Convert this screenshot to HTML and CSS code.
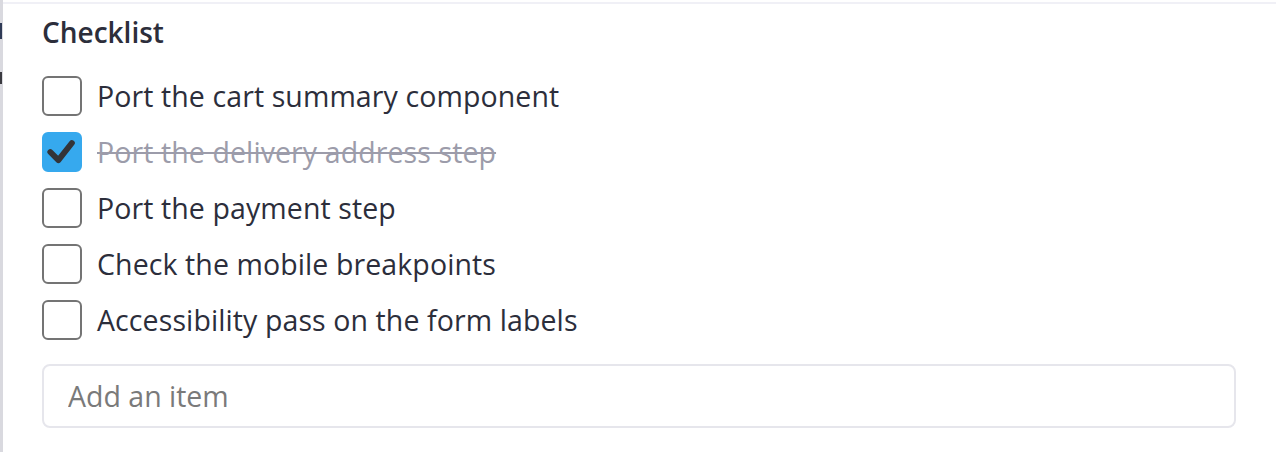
FILE: index.html
```html
<!DOCTYPE html>
<html lang="en">
  <head>
    <meta charset="UTF-8" />
    <title>Checklist</title>
    <link rel="stylesheet" href="styles.css">
  </head>
  <body>
    <div class="page">
      <div class="side">
        <span class="mark mark-one"></span>
        <span class="mark mark-two"></span>
      </div>
      <div class="panel">
        <h3 class="title">Checklist</h3>
        <ul class="checklist">
          <li class="check-item">
            <span class="box"></span>
            <span class="label">Port the cart summary component</span>
          </li>
          <li class="check-item done">
            <span class="box">
              <svg viewBox="0 0 40 40" width="40" height="40">
                <path d="M7 20 L16 29 L31 10" fill="none" stroke="#333438" stroke-width="6.5" stroke-linecap="round" stroke-linejoin="round" />
              </svg>
            </span>
            <span class="label">Port the delivery address step</span>
          </li>
          <li class="check-item">
            <span class="box"></span>
            <span class="label">Port the payment step</span>
          </li>
          <li class="check-item">
            <span class="box"></span>
            <span class="label">Check the mobile breakpoints</span>
          </li>
          <li class="check-item">
            <span class="box"></span>
            <span class="label">Accessibility pass on the form labels</span>
          </li>
        </ul>
        <input class="add-input" type="text" placeholder="Add an item" />
      </div>
    </div>
  </body>
</html>
```

FILE: styles.css
```css
* {
  margin: 0;
  padding: 0;
  box-sizing: border-box;
}

body {
  font-family: "Open Sans", "Noto Sans", sans-serif;
  background-color: #fff;
  color: #2c2e3b;
}

.page {
  display: flex;
  height: 452px;
  overflow: hidden;
}

/* Edge of the column behind the panel */
.side {
  width: 3px;
  background-color: #d9d9df;
  display: flex;
  flex-direction: column;
}

.mark {
  display: block;
  width: 2px;
  background-color: #2f3a56;
}

.mark-one {
  height: 16px;
  margin-top: 23px;
}

.mark-two {
  height: 12px;
  margin-top: 33px;
  background-color: #3a3a40;
}

/* Checklist panel */
.panel {
  flex: 1;
  margin-top: 2px;
  border-top: 2px solid #f0f0f6;
  padding: 10px 40px 0 39px;
}

.title {
  font-size: 28px;
  font-weight: 600;
  line-height: 36px;
  color: #2c2e3b;
  margin-bottom: 18px;
}

.checklist {
  list-style: none;
}

.check-item {
  display: flex;
  align-items: center;
  height: 56px;
}

.box {
  width: 40px;
  height: 40px;
  border: 2px solid #747474;
  border-radius: 6px;
  margin-right: 15px;
  flex-shrink: 0;
  display: flex;
  align-items: center;
  justify-content: center;
}

.label {
  font-size: 28.5px;
  line-height: 38px;
  letter-spacing: 0.1px;
}

.done .box {
  background-color: #36a9ee;
  border-color: #36a9ee;
}

.done .box svg {
  display: block;
}

.done .label {
  color: #9c9caa;
  text-decoration: line-through;
  text-decoration-thickness: 2px;
}

.add-input {
  display: block;
  width: 100%;
  height: 64px;
  margin-top: 16px;
  padding: 0 24px;
  border: 2px solid #e6e6ec;
  border-radius: 8px;
  font-family: inherit;
  font-size: 28.5px;
  color: #2c2e3b;
}

.add-input::placeholder {
  color: #7a7a7a;
}

.add-input:focus {
  outline: none;
}
```
